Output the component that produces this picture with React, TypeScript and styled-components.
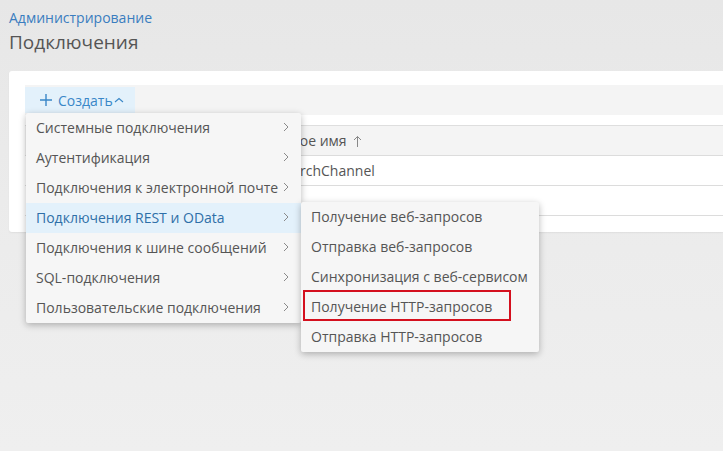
import React from "react";
import styled, { createGlobalStyle } from "styled-components";

const Global = createGlobalStyle`
  html, body { margin: 0; padding: 0; }
  body {
    background: linear-gradient(180deg, #e7e7e7 0%, #ececec 55%, #efefef 100%);
    font-family: "Open Sans", "Noto Sans", sans-serif;
    width: 723px;
    height: 451px;
    overflow: hidden;
  }
`;

const Page = styled.div`
  padding: 8px 0 0 9px;
`;

const Breadcrumb = styled.div`
  font-size: 14px;
  line-height: 20px;
  color: #3a7dbf;
`;

const Title = styled.h1`
  margin: 1px 0 0 0;
  font-size: 19px;
  font-weight: 400;
  line-height: 26px;
  color: #555;
`;

const Card = styled.div`
  margin-top: 16px;
  background: #fff;
  border-radius: 3px 0 0 3px;
  padding: 14px 0 16px 16px;
  box-shadow: 0 1px 2px rgba(0, 0, 0, 0.06);
`;

const Toolbar = styled.div`
  position: relative;
  display: flex;
  align-items: center;
  height: 30px;
  background: #f4f4f4;
`;

const CreateButton = styled.button`
  display: flex;
  align-items: center;
  gap: 6px;
  height: 26px;
  padding: 0 11px 0 15px;
  border: none;
  background: #e3f1fb;
  color: #3a87c8;
  font-family: "Open Sans", "Noto Sans", sans-serif;
  font-size: 14px;
  cursor: pointer;
`;

const Table = styled.div`
  margin-top: 10px;
  border-top: 1px solid #dedede;
`;

const Row = styled.div<{ $header?: boolean }>`
  display: grid;
  grid-template-columns: 188px 1fr;
  height: 29px;
  align-items: center;
  border-bottom: 1px solid #dcdcdc;
  background: ${(p) => (p.$header ? "#f4f4f4" : "#fff")};
  font-size: 14px;
  color: #555;
`;

const Cell = styled.div`
  display: flex;
  align-items: center;
  gap: 6px;
  white-space: nowrap;
  overflow: hidden;
`;

const Menu = styled.ul<{ $width: number }>`
  position: absolute;
  margin: 0;
  padding: 0;
  list-style: none;
  width: ${(p) => p.$width}px;
  background: #f6f6f6;
  border-radius: 2px;
  box-shadow: 0 2px 7px rgba(0, 0, 0, 0.28);
  z-index: 10;
`;

const MainMenu = styled(Menu)`
  left: 1px;
  top: 28px;
`;

const SubMenu = styled(Menu)`
  left: 100%;
  top: -1px;
`;

const Item = styled.li<{ $active?: boolean }>`
  position: relative;
  display: flex;
  align-items: center;
  justify-content: space-between;
  height: 30px;
  box-sizing: border-box;
  padding: 0 12px 2px 10px;
  font-size: 14px;
  white-space: nowrap;
  color: ${(p) => (p.$active ? "#2f6fa8" : "#555")};
  background: ${(p) => (p.$active ? "#e3f1fb" : "transparent")};
`;

const Highlight = styled.span`
  position: absolute;
  left: 2px;
  top: -2px;
  width: 204px;
  height: 27px;
  border: 2px solid #d4101e;
  pointer-events: none;
`;

const Chevron = () => (
  <svg width="6" height="10" viewBox="0 0 6 10" fill="none">
    <polyline points="1,1 5,5 1,9" stroke="#8a8a8a" strokeWidth="1" />
  </svg>
);

const Plus = () => (
  <svg width="12" height="12" viewBox="0 0 12 12">
    <path d="M6 0v12M0 6h12" stroke="#3a87c8" strokeWidth="1.4" />
  </svg>
);

const CaretUp = () => (
  <svg width="10" height="6" viewBox="0 0 10 6" fill="none" style={{ marginLeft: -5 }}>
    <polyline points="1,5 5,1.5 9,5" stroke="#3a87c8" strokeWidth="1.1" />
  </svg>
);

const SortUp = () => (
  <svg width="9" height="12" viewBox="0 0 9 12" fill="none">
    <path d="M4.5 1.5V12M1 5l3.5-3.5L8 5" stroke="#888" strokeWidth="1" />
  </svg>
);

const mainItems = [
  "Системные подключения",
  "Аутентификация",
  "Подключения к электронной почте",
  "Подключения REST и OData",
  "Подключения к шине сообщений",
  "SQL-подключения",
  "Пользовательские подключения",
];

const subItems = [
  "Получение веб-запросов",
  "Отправка веб-запросов",
  "Синхронизация с веб-сервисом",
  "Получение HTTP-запросов",
  "Отправка HTTP-запросов",
];

export default function App() {
  return (
    <>
      <Global />
      <Page>
        <Breadcrumb>Администрирование</Breadcrumb>
        <Title>Подключения</Title>
        <Card>
          <Toolbar>
            <CreateButton>
              <Plus />
              Создать
              <CaretUp />
            </CreateButton>
            <MainMenu $width={275}>
              {mainItems.map((t, i) => (
                <Item key={t} $active={i === 3}>
                  <span>{t}</span>
                  <Chevron />
                  {i === 3 && (
                    <SubMenu $width={238}>
                      {subItems.map((s, j) => (
                        <Item key={s}>
                          <span>{s}</span>
                          {j === 3 && <Highlight />}
                        </Item>
                      ))}
                    </SubMenu>
                  )}
                </Item>
              ))}
            </MainMenu>
          </Toolbar>
          <Table>
            <Row $header>
              <Cell />
              <Cell>
                Отображаемое имя
                <SortUp />
              </Cell>
            </Row>
            <Row>
              <Cell />
              <Cell>MessagesSearchChannel</Cell>
            </Row>
            <Row>
              <Cell />
              <Cell />
            </Row>
          </Table>
        </Card>
      </Page>
    </>
  );
}
